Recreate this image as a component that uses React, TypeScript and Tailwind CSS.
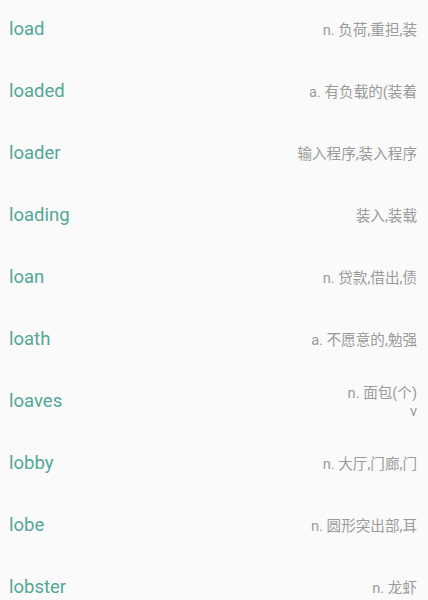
const words: Array<{ word: string; meaning: string[] }> = [
  { word: 'load', meaning: ['n. 负荷,重担,装'] },
  { word: 'loaded', meaning: ['a. 有负载的(装着'] },
  { word: 'loader', meaning: ['输入程序,装入程序'] },
  { word: 'loading', meaning: ['装入,装载'] },
  { word: 'loan', meaning: ['n. 贷款,借出,债'] },
  { word: 'loath', meaning: ['a. 不愿意的,勉强'] },
  { word: 'loaves', meaning: ['n. 面包(个)', 'v'] },
  { word: 'lobby', meaning: ['n. 大厅,门廊,门'] },
  { word: 'lobe', meaning: ['n. 圆形突出部,耳'] },
  { word: 'lobster', meaning: ['n. 龙虾'] },
];

export default function App() {
  return (
    <div
      className="h-[600px] overflow-hidden bg-[#fafafa]"
      style={{ fontFamily: 'Roboto, "Noto Sans CJK SC", sans-serif' }}
    >
      <div className="-mt-[1px]">
        {words.map(item => (
          <div key={item.word} className="h-[62px] flex items-center justify-between pl-[9px] pr-[11px]">
            <span className="text-[18.5px] text-[#52a796]">{item.word}</span>
            <div className="text-right text-[14.6px] leading-[18px] text-[#9a9a9a]">
              {item.meaning.map(line => (
                <div key={line}>{line}</div>
              ))}
            </div>
          </div>
        ))}
      </div>
    </div>
  );
}
